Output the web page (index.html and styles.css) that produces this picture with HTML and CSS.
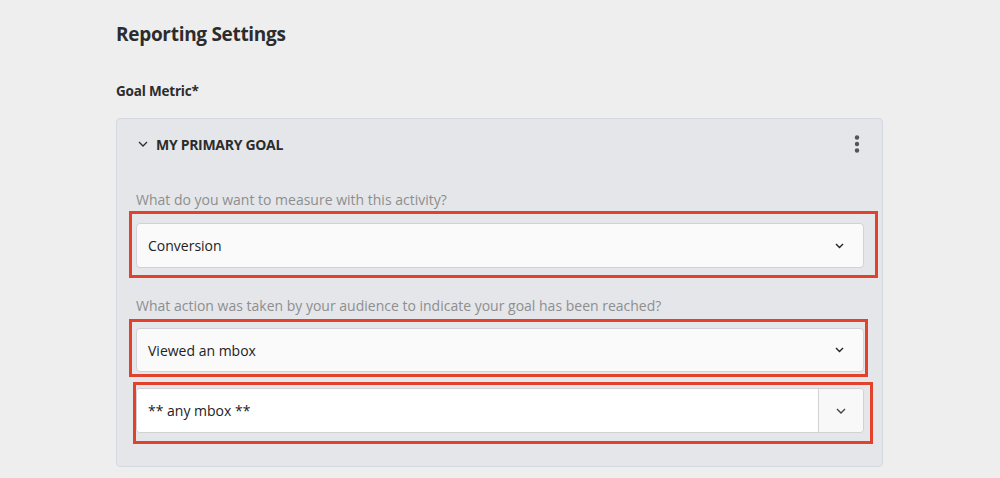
FILE: index.html
```html
<!DOCTYPE html>
<html>
<head>
<meta charset="utf-8">
<link rel="stylesheet" href="styles.css">
</head>
<body>
<div class="page">
  <h1 class="title">Reporting Settings</h1>
  <div class="field-label">Goal Metric*</div>
  <div class="panel">
    <div class="panel-head">
      <div class="head-left">
        <svg class="head-chev" width="10" height="6" viewBox="0 0 10 6"><path d="M1 1 L5 5 L9 1" fill="none" stroke="#2c2c2c" stroke-width="1.3"/></svg>
        <span class="head-title">MY PRIMARY GOAL</span>
      </div>
      <svg class="kebab" width="6" height="18" viewBox="0 0 6 18"><circle cx="3" cy="2.5" r="2.2" fill="#555"/><circle cx="3" cy="9" r="2.2" fill="#555"/><circle cx="3" cy="15.5" r="2.2" fill="#555"/></svg>
    </div>
    <div class="q q1">What do you want to measure with this activity?</div>
    <div class="select s1">
      <span>Conversion</span>
      <svg width="9" height="6" viewBox="0 0 9 6"><path d="M1 1 L4.5 4.5 L8 1" fill="none" stroke="#222" stroke-width="1.4"/></svg>
    </div>
    <div class="q q2">What action was taken by your audience to indicate your goal has been reached?</div>
    <div class="select s2">
      <span>Viewed an mbox</span>
      <svg width="9" height="6" viewBox="0 0 9 6"><path d="M1 1 L4.5 4.5 L8 1" fill="none" stroke="#222" stroke-width="1.4"/></svg>
    </div>
    <div class="combo">
      <div class="combo-input">** any mbox **</div>
      <div class="combo-btn"><svg width="10" height="6" viewBox="0 0 10 6"><path d="M1 1 L5 5 L9 1" fill="none" stroke="#444" stroke-width="1.4"/></svg></div>
    </div>
    <div class="mark m1"></div>
    <div class="mark m2"></div>
    <div class="mark m3"></div>
  </div>
</div>
</body>
</html>
```
FILE: styles.css
```css
html, body {
  margin: 0;
  padding: 0;
  background: #eeeeee;
  font-family: "Open Sans", "Liberation Sans", sans-serif;
  color: #2c2c2c;
}
.page {
  margin-left: 116px;
  width: 767px;
  padding-top: 20px;
}
.title {
  margin: 0;
  font-size: 19px;
  line-height: 28px;
  font-weight: 700;
  color: #2c2c2c;
  letter-spacing: -0.3px;
}
.field-label {
  margin-top: 33px;
  font-size: 13.5px;
  line-height: 20px;
  font-weight: 700;
  color: #2c2c2c;
  letter-spacing: -0.2px;
  margin-bottom: 17px;
}
.panel {
  position: relative;
  box-sizing: border-box;
  height: 349px;
  background: #e4e6ea;
  border: 1px solid #d4d9e1;
  border-radius: 4px;
  padding: 0 18px 0 19px;
}
.panel-head {
  display: flex;
  align-items: center;
  justify-content: space-between;
  height: 50px;
  padding-left: 2px;
  padding-right: 4px;
}
.head-left {
  display: flex;
  align-items: center;
  gap: 8px;
}
.head-title {
  font-size: 14px;
  font-weight: 700;
  color: #2c2c2c;
  letter-spacing: -0.3px;
}
.q {
  font-size: 14px;
  line-height: 20px;
  color: #8e8e8e;
}
.q1 { margin-top: 21px; }
.q2 { margin-top: 28px; }
.select {
  box-sizing: border-box;
  display: flex;
  align-items: center;
  justify-content: space-between;
  background: #fafafa;
  border: 1px solid #d2d2d2;
  border-radius: 4px;
  padding: 0 19px 0 11px;
  font-size: 14px;
  color: #222;
}
.s1 { height: 45px; margin-top: 13px; }
.s2 { height: 44px; margin-top: 12px; }
.combo {
  box-sizing: border-box;
  display: flex;
  height: 45px;
  margin-top: 16px;
  border: 1px solid #d2d2d2;
  border-radius: 4px;
  overflow: hidden;
}
.combo-input {
  flex: 1;
  background: #fff;
  display: flex;
  align-items: center;
  padding-left: 11px;
  font-size: 14px;
  color: #222;
}
.combo-btn {
  width: 44px;
  background: #f8f8f8;
  border-left: 1px solid #d2d2d2;
  display: flex;
  align-items: center;
  justify-content: center;
}
.mark {
  position: absolute;
  border: 3px solid #e2412c;
  box-sizing: border-box;
}
.m1 { left: 12px; top: 92px; width: 749px; height: 67px; }
.m2 { left: 12px; top: 200px; width: 739px; height: 58px; }
.m3 { left: 16px; top: 263px; width: 740px; height: 62px; }
```
